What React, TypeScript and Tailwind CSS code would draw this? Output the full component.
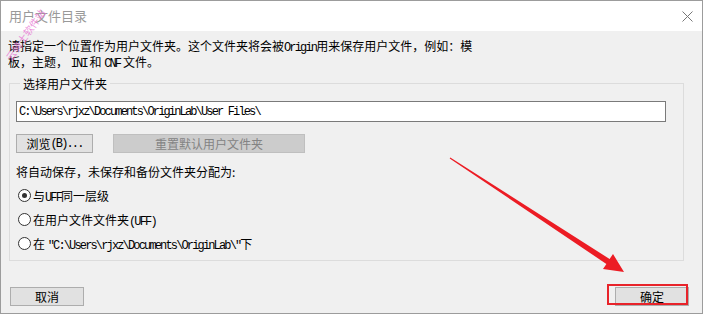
import React, { useState } from 'react';

const cjk = "font-['Noto_Sans_CJK_SC',sans-serif]";

// latin bits that SimSun draws half width
const M: React.FC<{ children: React.ReactNode }> = ({ children }) => (
  <span className="font-['Liberation_Mono',monospace] text-[12px] leading-none tracking-[-1.85px]">{children}</span>
);

const Radio: React.FC<{ checked: boolean; onClick: () => void; children: React.ReactNode }> = ({ checked, onClick, children }) => (
  <div className="flex items-center h-[15px] ml-[2px] gap-[2px] cursor-default" onClick={onClick}>
    <span className="w-[13px] h-[13px] rounded-full border border-[#333] bg-white flex items-center justify-center">
      {checked && <span className="w-[5px] h-[5px] rounded-full bg-[#333]" />}
    </span>
    <span className="leading-[15px]">{children}</span>
  </div>
);

const App: React.FC = () => {
  const [level, setLevel] = useState(0);

  return (
    <div className={`relative w-[703px] h-[314px] bg-[#f0f0f0] border border-[#9c9c9c] flex flex-col text-[12px] text-black ${cjk}`}>
      {/* Title bar */}
      <div className="h-[30px] bg-white flex items-center justify-between pl-[8px] pr-[8px] shrink-0">
        <span className="text-[#999] text-[13px]">用户文件目录</span>
        <svg width="11" height="11" viewBox="0 0 11 11" className="mr-[1px]">
          <path d="M0.5 0.5 L10.5 10.5 M10.5 0.5 L0.5 10.5" stroke="#777" strokeWidth="1" />
        </svg>
      </div>

      {/* Body */}
      <div className="pl-[8px] pr-[18px] pt-[7px]">
        <p className="-ml-[1px] leading-[15px] h-[30px]">
          请指定一个位置作为用户文件夹。这个文件夹将会被<M>Origin</M>用来保存用户文件，例如：模
          <br />
          板，主题， <M>INI</M> 和 <M>CNF</M> 文件。
        </p>

        <fieldset className="mt-[8px] border border-[#dcdcdc] pl-[6px] pr-[6px] pb-[8px] h-[185px]">
          <legend className="ml-[4px] px-[3px] leading-[15px]">选择用户文件夹</legend>
          <div className="mt-[10px] w-[650px] h-[21px] bg-white border border-[#7a7a7a] flex items-center px-[2px]">
            <M>C:\Users\rjxz\Documents\OriginLab\User Files\</M>
          </div>
          <div className="mt-[12px] flex gap-[20px]">
            <button className="w-[77px] h-[19px] bg-[#e1e1e1] border border-[#adadad] flex items-center justify-center leading-none">
              浏览<M>(B)...</M>
            </button>
            <button disabled className="w-[192px] h-[19px] bg-[#cccccc] border border-[#bfbfbf] text-[#838383] flex items-center justify-center leading-none">
              重置默认用户文件夹
            </button>
          </div>
          <div className="mt-[11px] leading-[15px]">将自动保存，未保存和备份文件夹分配为:</div>
          <div className="mt-[9px] flex flex-col gap-[9px]">
            <Radio checked={level === 0} onClick={() => setLevel(0)}>与<M>UFF</M>同一层级</Radio>
            <Radio checked={level === 1} onClick={() => setLevel(1)}>在用户文件文件夹<M>(UFF)</M></Radio>
            <Radio checked={level === 2} onClick={() => setLevel(2)}>在 <M>"C:\Users\rjxz\Documents\OriginLab\"</M>下</Radio>
          </div>
        </fieldset>
      </div>

      {/* Footer */}
      <div className="mt-auto flex justify-between pl-[9px] pr-[13px] pb-[7px]">
        <button className="w-[74px] h-[19px] bg-[#e1e1e1] border border-[#adadad] flex items-center justify-center leading-none">
          取消
        </button>
        <div className="relative">
          <button className="w-[74px] h-[19px] bg-[#e1e1e1] border border-[#adadad] flex items-center justify-center leading-none">
            确定
          </button>
          {/* annotation box */}
          <div className="absolute -left-[8px] -top-[3px] w-[81px] h-[21px] border-2 border-[#e8232a] pointer-events-none" />
        </div>
      </div>

      {/* annotation arrow */}
      <svg className="absolute -left-[1px] -top-[1px] pointer-events-none" width="703" height="314">
        <polygon
          points="450.3,157.6 609.6,259 613,254 624,272 603,269 606.4,264 449.7,158.4"
          fill="#ec1c24"
        />
      </svg>

      {/* watermark */}
      <div className="absolute left-[-6px] top-[26px] -rotate-[55deg] text-[10px] text-[#e874d4] opacity-80 whitespace-nowrap pointer-events-none">
        云骑士软件站
      </div>
    </div>
  );
};

export default App;
